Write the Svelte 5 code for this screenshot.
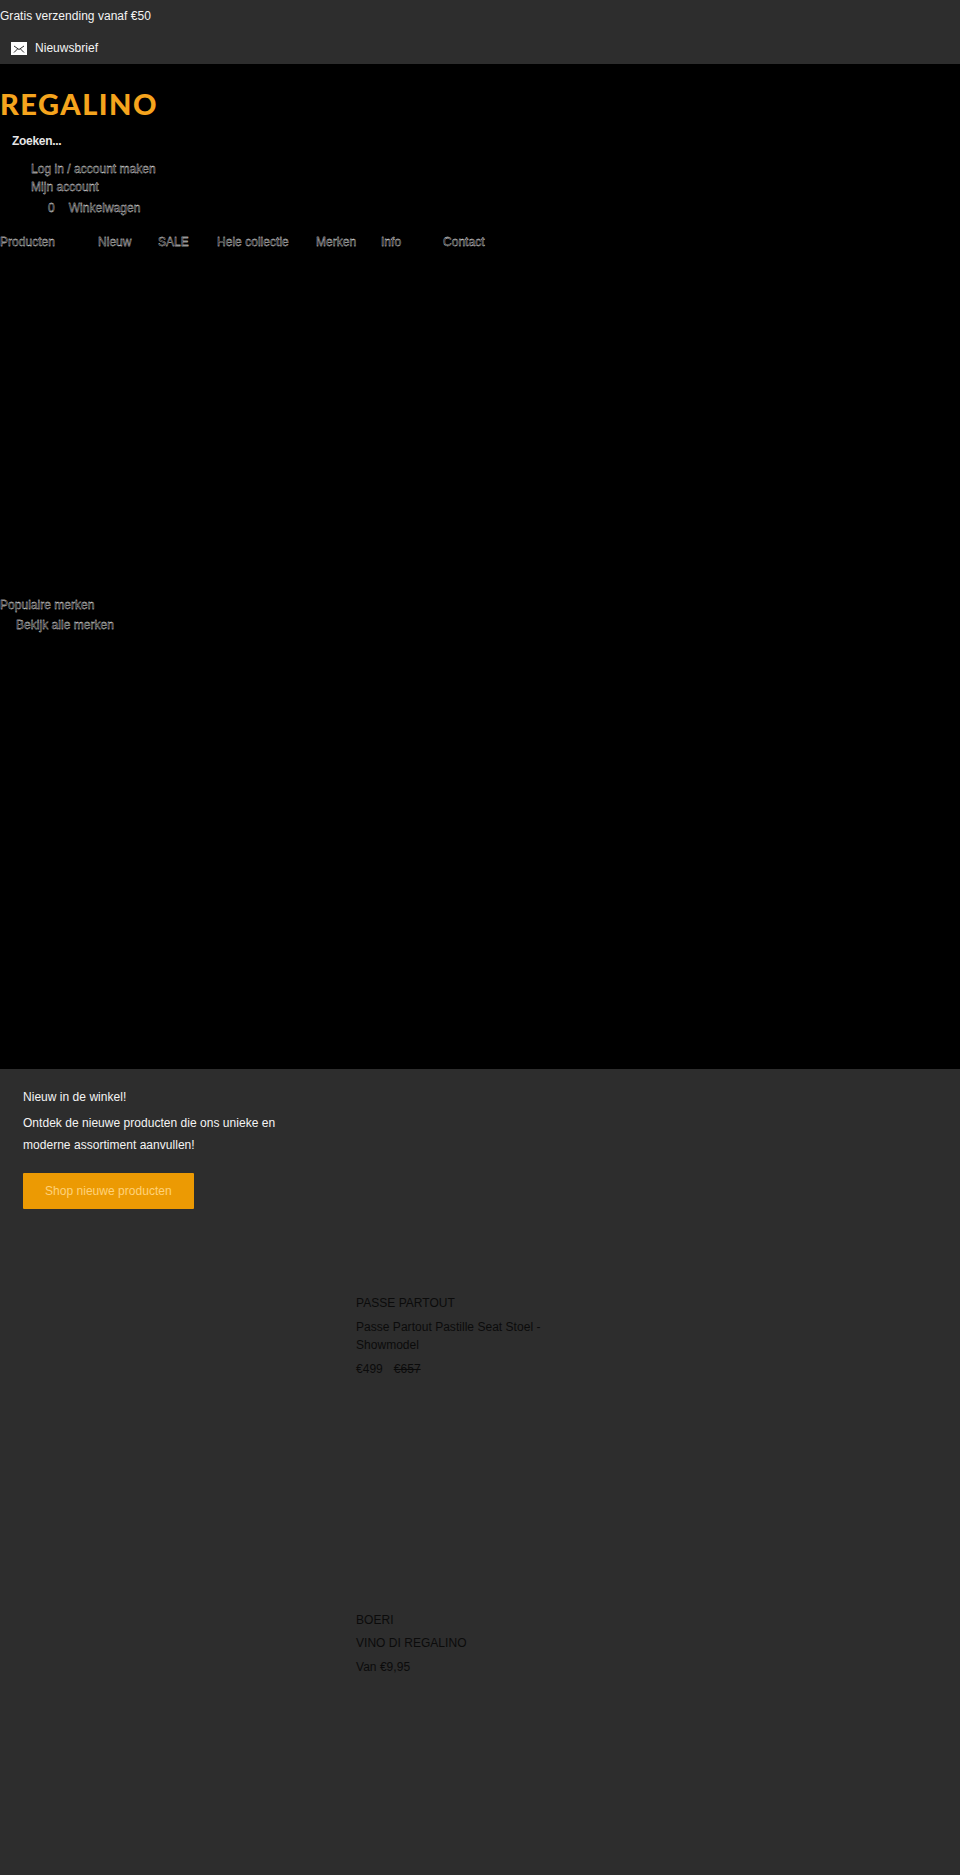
<script>
  const nav = [
    { label: 'Producten', w: 98 },
    { label: 'Nieuw', w: 60 },
    { label: 'SALE', w: 59 },
    { label: 'Hele collectie', w: 99 },
    { label: 'Merken', w: 65 },
    { label: 'Info', w: 62 },
    { label: 'Contact', w: 60 }
  ];
</script>

<div class="page">
  <section class="top">
    <p class="promo">Gratis verzending vanaf €50</p>
    <div class="news">
      <svg width="16" height="13" viewBox="0 0 16 13"><rect width="16" height="13" fill="#fff"/><path d="M3 4 8 7.500 13 4M3 10.500 6.500 7M13 10.500 9.500 7" fill="none" stroke="#2d2d2d" stroke-width="1"/></svg>
      <span>Nieuwsbrief</span>
    </div>
  </section>

  <section class="dark">
    <div class="logo">REGALINO</div>
    <div class="search">Zoeken...</div>
    <div class="account">
      <a href="#a">Log in / account maken</a>
      <a href="#b">Mijn account</a>
    </div>
    <div class="cart"><span>0</span><span>Winkelwagen</span></div>
    <nav>
      {#each nav as item}
        <a href="#n" style="width:{item.w}px">{item.label}</a>
      {/each}
    </nav>
    <div class="brands">
      <div>Populaire merken</div>
      <div class="all">Bekijk alle merken</div>
    </div>
  </section>

  <section class="main">
    <div class="intro">
      <h2>Nieuw in de winkel!</h2>
      <p>Ontdek de nieuwe producten die ons unieke en moderne assortiment aanvullen!</p>
      <a class="btn" href="#s">Shop nieuwe producten</a>
    </div>
    <article class="p1">
      <div class="vendor">PASSE PARTOUT</div>
      <div class="title">Passe Partout Pastille Seat Stoel - Showmodel</div>
      <div class="price"><span>€499</span><s>€657</s></div>
    </article>
    <article class="p2">
      <div class="vendor">BOERI</div>
      <div class="title">VINO DI REGALINO</div>
      <div class="price"><span>Van €9,95</span></div>
    </article>
  </section>
</div>

<style>
  :global(body) { margin: 0; background: #2d2d2d; }
  .page { width: 960px; height: 1875px; overflow: hidden; font-family: "Liberation Sans", Arial, sans-serif; font-size: 12px; letter-spacing: 0.03px; color: #f4f4f4; background: #2d2d2d; }
  p, h2 { margin: 0; font-weight: 400; }
  a { color: inherit; text-decoration: none; }

  .top { height: 64px; background: #2d2d2d; box-sizing: border-box; }
  .promo { line-height: 16px; padding-top: 8px; }
  .news { display: flex; align-items: center; gap: 8px; padding: 16px 0 0 11px; line-height: 16px; }

  .dark { height: 1005px; background: #000; box-sizing: border-box; padding-top: 25px; display: flex; flex-direction: column; }
  .logo { font-family: "Lato", sans-serif; font-weight: 900; font-size: 29px; letter-spacing: 1.5px; line-height: 30px; color: #f5a41d; }
  .search { margin: 14px 0 0 12px; font-weight: 700; color: #e6e6e6; line-height: 16px; letter-spacing: -0.3px; }
  .account { display: flex; flex-direction: column; margin: 11px 0 0 31px; line-height: 18px; }
  .account, .cart, nav, .brands { color: #000; -webkit-text-stroke: 0.3px #fff; }
  .cart { display: flex; gap: 14px; margin: 3px 0 0 48px; line-height: 18px; }
  nav { display: flex; margin-top: 16px; line-height: 18px; }
  nav a { display: block; flex: none; }
  .brands { margin-top: 344px; line-height: 20px; }
  .all { margin-left: 16px; }

  .main { height: 806px; background: #2d2d2d; }
  .intro { padding: 19px 0 0 23px; width: 255px; }
  .intro h2 { line-height: 18px; font-size: 12px; }
  .intro p { margin-top: 6px; line-height: 22px; }
  .btn { display: inline-block; margin-top: 17px; padding: 0 22px; height: 36px; line-height: 36px; background: #ec9a03; color: #ffd27a; border-radius: 1px; }

  article { margin-left: 356px; width: 220px; color: #0b0b0b; }
  .p1 { margin-top: 85px; }
  .p2 { margin-top: 233px; }
  .vendor { line-height: 18px; }
  .title { margin-top: 6px; line-height: 18px; }
  .p2 .title { margin-top: 5px; }
  .price { margin-top: 6px; line-height: 18px; display: flex; gap: 11px; }
</style>
